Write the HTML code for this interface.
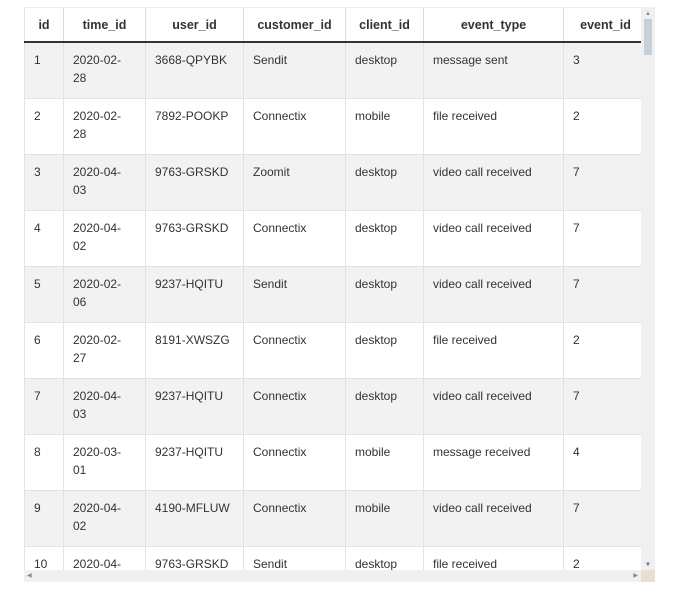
<!DOCTYPE html>
<html><head><style>
body{margin:0;background:#fff;width:675px;height:601px;overflow:hidden;font-family:"Liberation Sans",Arial,sans-serif;font-size:12px;color:#333;position:relative}
#wrap{position:absolute;left:24px;top:7px;width:617px;height:563px;overflow:hidden;border-top:1px solid #eee}
table{border-collapse:collapse;table-layout:fixed;width:623px}
th{height:33px;font-weight:bold;text-align:center;border-right:1px solid #ddd;border-bottom:2px solid #333;padding:0;font-size:12.5px}
td{height:56px;vertical-align:top;padding:8px 9px 0 9px;box-sizing:border-box;line-height:18px;border-right:1px solid #dde3e6;border-bottom:1px solid #dde3e6;white-space:nowrap}
tr.o td{background:#f2f2f2}
td:first-child,th:first-child{border-left:1px solid #dde3e6}
#vs{position:absolute;left:641px;top:7px;width:14px;height:563px;background:#f0f0f0}
#hs{position:absolute;left:24px;top:570px;width:617px;height:12px;background:#f0f0f0}
#corner{position:absolute;left:641px;top:570px;width:14px;height:12px;background:#e8e0d0}
</style></head><body>
<div id="wrap"><table>
<colgroup><col style="width:39px"><col style="width:82px"><col style="width:98px"><col style="width:102px"><col style="width:78px"><col style="width:140px"><col style="width:84px"></colgroup>
<tr><th>id</th><th>time_id</th><th>user_id</th><th>customer_id</th><th>client_id</th><th>event_type</th><th>event_id</th></tr>
<tr class="o"><td>1</td><td>2020-02-<br>28</td><td>3668-QPYBK</td><td>Sendit</td><td>desktop</td><td>message sent</td><td>3</td></tr>
<tr><td>2</td><td>2020-02-<br>28</td><td>7892-POOKP</td><td>Connectix</td><td>mobile</td><td>file received</td><td>2</td></tr>
<tr class="o"><td>3</td><td>2020-04-<br>03</td><td>9763-GRSKD</td><td>Zoomit</td><td>desktop</td><td>video call received</td><td>7</td></tr>
<tr><td>4</td><td>2020-04-<br>02</td><td>9763-GRSKD</td><td>Connectix</td><td>desktop</td><td>video call received</td><td>7</td></tr>
<tr class="o"><td>5</td><td>2020-02-<br>06</td><td>9237-HQITU</td><td>Sendit</td><td>desktop</td><td>video call received</td><td>7</td></tr>
<tr><td>6</td><td>2020-02-<br>27</td><td>8191-XWSZG</td><td>Connectix</td><td>desktop</td><td>file received</td><td>2</td></tr>
<tr class="o"><td>7</td><td>2020-04-<br>03</td><td>9237-HQITU</td><td>Connectix</td><td>desktop</td><td>video call received</td><td>7</td></tr>
<tr><td>8</td><td>2020-03-<br>01</td><td>9237-HQITU</td><td>Connectix</td><td>mobile</td><td>message received</td><td>4</td></tr>
<tr class="o"><td>9</td><td>2020-04-<br>02</td><td>4190-MFLUW</td><td>Connectix</td><td>mobile</td><td>video call received</td><td>7</td></tr>
<tr><td>10</td><td>2020-04-<br>01</td><td>9763-GRSKD</td><td>Sendit</td><td>desktop</td><td>file received</td><td>2</td></tr>
</table></div>
<div id="vs"><div style="position:absolute;left:3px;top:12px;width:8px;height:36px;background:#c8d0d8"></div>
<div style="position:absolute;left:4px;top:4px;font-size:6px;color:#888">▲</div>
<div style="position:absolute;left:4px;bottom:2px;font-size:6px;color:#666">▼</div></div>
<div id="hs"><div style="position:absolute;left:3px;top:2px;font-size:6px;color:#888">◀</div><div style="position:absolute;right:3px;top:2px;font-size:6px;color:#888">▶</div></div>
<div id="corner"></div>
</body></html>
